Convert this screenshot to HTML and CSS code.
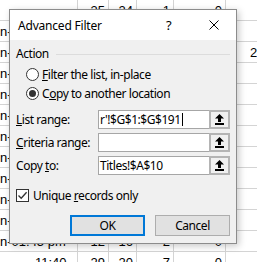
FILE: index.html
```html
<!DOCTYPE html>
<html>
<head>
<meta charset="utf-8">
<link rel="stylesheet" href="styles.css">
</head>
<body>
<div class="sheet">
  <div class="c a"></div><div class="c n">35</div><div class="c n">24</div><div class="c n">1</div><div class="c n">0</div><div class="c"></div>
  <div class="c a">n-</div><div class="c n"></div><div class="c n"></div><div class="c n"></div><div class="c n"></div><div class="c"></div>
  <div class="c a">n-</div><div class="c n"></div><div class="c n"></div><div class="c n"></div><div class="c n"></div><div class="c f">2</div>
  <div class="c a">n-</div><div class="c n"></div><div class="c n"></div><div class="c n"></div><div class="c n"></div><div class="c"></div>
  <div class="c a">n-</div><div class="c n"></div><div class="c n"></div><div class="c n"></div><div class="c n"></div><div class="c"></div>
  <div class="c a">n-</div><div class="c n"></div><div class="c n"></div><div class="c n"></div><div class="c n"></div><div class="c"></div>
  <div class="c a">n-</div><div class="c n"></div><div class="c n"></div><div class="c n"></div><div class="c n"></div><div class="c"></div>
  <div class="c a">n-</div><div class="c n"></div><div class="c n"></div><div class="c n"></div><div class="c n"></div><div class="c"></div>
  <div class="c a">n-</div><div class="c n"></div><div class="c n"></div><div class="c n"></div><div class="c n"></div><div class="c"></div>
  <div class="c a">n-</div><div class="c n"></div><div class="c n"></div><div class="c n"></div><div class="c n"></div><div class="c"></div>
  <div class="c a">n-</div><div class="c n"></div><div class="c n"></div><div class="c n"></div><div class="c n"></div><div class="c"></div>
  <div class="c a">n-01:45 pm</div><div class="c n">12</div><div class="c n">16</div><div class="c n">2</div><div class="c n">0</div><div class="c"></div>
  <div class="c a ind">11:40</div><div class="c n">29</div><div class="c n">20</div><div class="c n">7</div><div class="c n">0</div><div class="c"></div>
</div>

<div class="dialog">
  <div class="titlebar">
    <span class="title">Advanced Filter</span>
    <span class="tbtn help">?</span>
    <span class="tbtn close"><svg width="10" height="10" viewBox="0 0 10 10"><path d="M0.5 0.5 L9.5 9.5 M9.5 0.5 L0.5 9.5" stroke="#000" stroke-width="1" fill="none"/></svg></span>
  </div>
  <div class="body">
    <div class="group-head"><span>Action</span><span class="gline"></span></div>
    <div class="radio"><span class="rb"></span><span><u>F</u>ilter the list, in-place</span></div>
    <div class="radio"><span class="rb on"></span><span>C<u>o</u>py to another location</span></div>
    <div class="fields">
      <div class="field">
        <span class="flabel"><u>L</u>ist range:</span>
        <div class="ref"><span class="val">r'!$G$1:$G$191<span class="caret"></span></span><span class="refbtn"><svg width="9" height="11" viewBox="0 0 9 11"><path d="M4.5 0 L9 4.5 H6 V8 H3 V4.5 H0 Z" fill="#000"/><rect x="0" y="9" width="9" height="2" fill="#000"/></svg></span></div>
      </div>
      <div class="field">
        <span class="flabel"><u>C</u>riteria range:</span>
        <div class="ref"><span class="val"></span><span class="refbtn"><svg width="9" height="11" viewBox="0 0 9 11"><path d="M4.5 0 L9 4.5 H6 V8 H3 V4.5 H0 Z" fill="#000"/><rect x="0" y="9" width="9" height="2" fill="#000"/></svg></span></div>
      </div>
      <div class="field">
        <span class="flabel">Copy <u>t</u>o:</span>
        <div class="ref"><span class="val">Titles!$A$10</span><span class="refbtn"><svg width="9" height="11" viewBox="0 0 9 11"><path d="M4.5 0 L9 4.5 H6 V8 H3 V4.5 H0 Z" fill="#000"/><rect x="0" y="9" width="9" height="2" fill="#000"/></svg></span></div>
      </div>
    </div>
    <div class="check"><span class="cb"><svg width="11" height="11" viewBox="0 0 11 11"><path d="M1.5 5.5 L4.2 8.3 L9.6 2.2" stroke="#333" stroke-width="1.3" fill="none"/></svg></span><span>Unique <u>r</u>ecords only</span></div>
    <div class="buttons"><span class="btn default">OK</span><span class="btn">Cancel</span></div>
  </div>
</div>
</body>
</html>
```

FILE: styles.css
```css
html, body {
  margin: 0;
  padding: 0;
  background: #fff;
  overflow: hidden;
}
body {
  width: 257px;
  height: 262px;
  position: relative;
}
.sheet {
  display: grid;
  grid-template-columns: 78px 31px 28px 37px 52px 40px;
  grid-auto-rows: 21px;
  font-family: "Liberation Sans", Arial, sans-serif;
  font-size: 13px;
  color: #000;
}
.c {
  box-sizing: border-box;
  border-right: 1px solid #d4d4d4;
  border-bottom: 1px solid #d4d4d4;
  line-height: 22px;
  white-space: nowrap;
  overflow: visible;
  padding: 0 3px 0 0;
}
.c.a {
  padding-left: 0;
  overflow: visible;
}
.c.ind { padding-left: 35px; }
.c.n, .c.f { text-align: right; }
.c.f { text-align: left; padding-left: 24px; }

.dialog {
  position: absolute;
  left: 9px;
  top: 9px;
  width: 228px;
  height: 235px;
  box-sizing: border-box;
  border: 1px solid #8c8c8c;
  background: #f0f0f0;
  box-shadow: 2px 2px 7px rgba(0,0,0,0.22);
  font-family: "Noto Sans", "Open Sans", sans-serif;
  font-size: 12px;
  letter-spacing: -0.45px;
  color: #000;
  display: flex;
  flex-direction: column;
}
.titlebar {
  height: 30px;
  background: #fff;
  display: flex;
  align-items: center;
  flex: none;
}
.title {
  flex: 1;
  padding-left: 8px;
  font-size: 12px;
  letter-spacing: -0.2px;
}
.tbtn {
  width: 45px;
  height: 30px;
  display: flex;
  align-items: center;
  justify-content: center;
}
.help { font-size: 13px; }
.body {
  padding: 6px 6px 0 6px;
  display: flex;
  flex-direction: column;
}
.group-head {
  display: flex;
  align-items: center;
  height: 16px;
  line-height: 16px;
}
.gline {
  flex: 1;
  height: 1px;
  background: #dcdcdc;
  margin-left: 7px;
}
.radio {
  display: flex;
  align-items: center;
  height: 19px;
  padding-left: 10px;
  gap: 3px;
}
.group-head + .radio { margin-top: 3px; }
.rb {
  width: 13px;
  height: 13px;
  box-sizing: border-box;
  border: 1px solid #333;
  border-radius: 50%;
  background: #fff;
  display: flex;
  align-items: center;
  justify-content: center;
}
.rb.on::after {
  content: "";
  width: 7px;
  height: 7px;
  border-radius: 50%;
  background: #333;
}
.fields {
  margin-top: 7px;
  display: flex;
  flex-direction: column;
  gap: 4px;
}
.field {
  display: flex;
  align-items: center;
  height: 19px;
}
.flabel {
  width: 82px;
  flex: none;
}
.ref {
  flex: 1;
  display: flex;
  height: 19px;
}
.val {
  flex: 1;
  box-sizing: border-box;
  border: 1px solid #a6a6a6;
  border-right: none;
  background: #fff;
  padding-left: 1px;
  line-height: 17px;
  white-space: nowrap;
  overflow: hidden;
  display: flex;
  align-items: center;
}
.caret {
  display: inline-block;
  width: 1px;
  height: 13px;
  background: #000;
  margin-left: 1px;
}
.refbtn {
  width: 21px;
  flex: none;
  box-sizing: border-box;
  border: 2px solid #b4b4b4;
  background: #f0f0f0;
  display: flex;
  align-items: center;
  justify-content: center;
}
.check {
  display: flex;
  align-items: center;
  height: 19px;
  margin-top: 11px;
  gap: 4px;
}
.cb {
  width: 13px;
  height: 13px;
  box-sizing: border-box;
  border: 1px solid #333;
  background: #fff;
  display: flex;
  align-items: center;
  justify-content: center;
}
.buttons {
  margin-top: 10px;
  display: flex;
  justify-content: flex-end;
  gap: 10px;
}
.btn {
  width: 75px;
  height: 21px;
  box-sizing: border-box;
  border: 1px solid #adadad;
  background: #e1e1e1;
  display: flex;
  align-items: center;
  justify-content: center;
}
.btn.default {
  border: 2px solid #0078d7;
}
```
